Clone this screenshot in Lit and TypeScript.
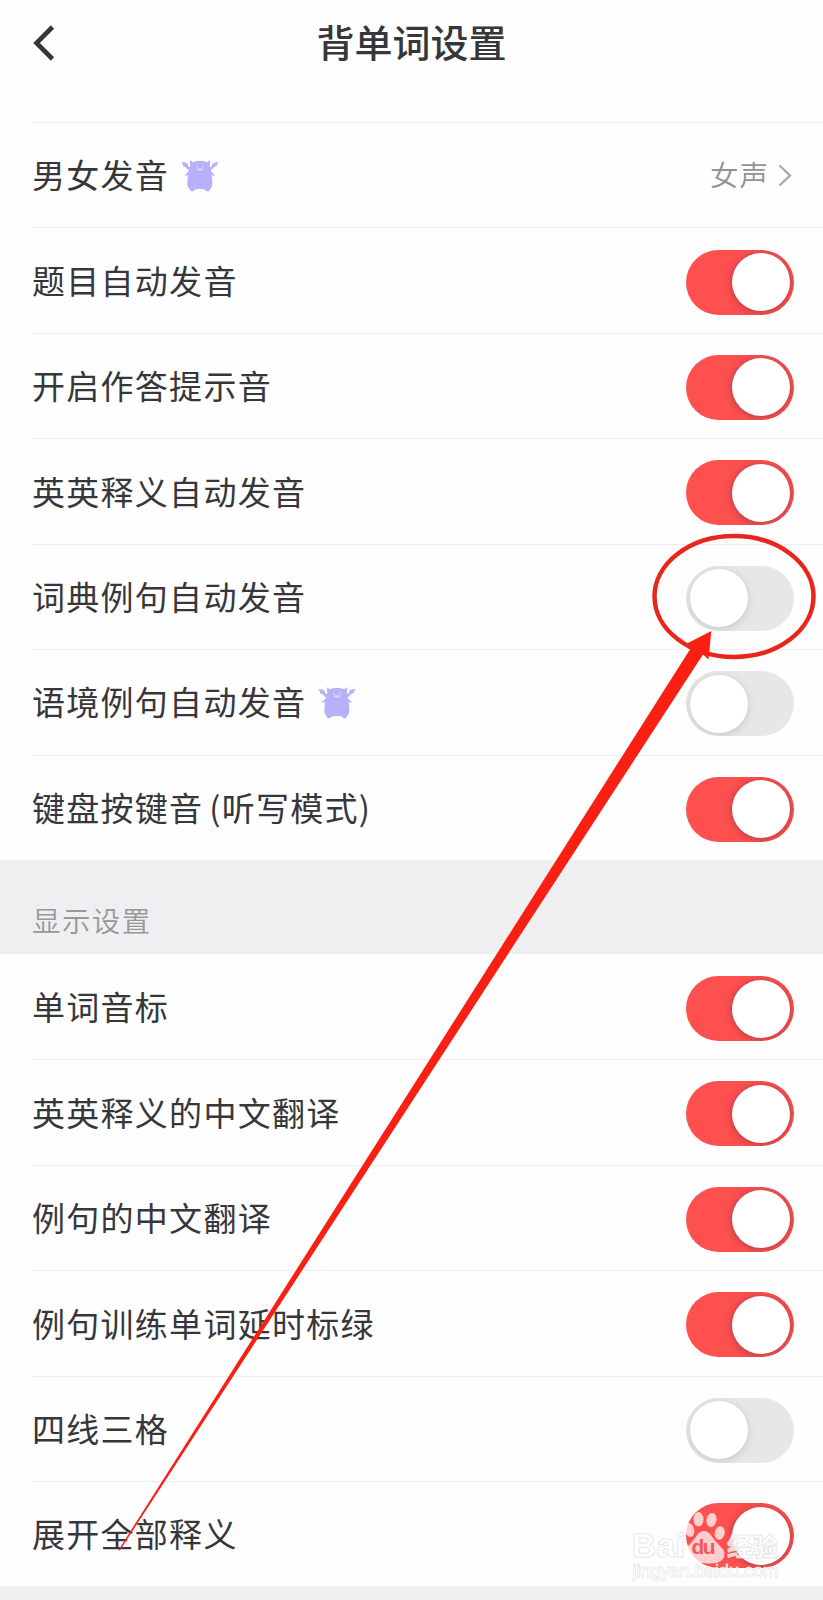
import { LitElement, html, css, svg, nothing } from "lit";
import { customElement, property } from "lit/decorators.js";

interface Setting {
  label: string;
  on?: boolean;
  value?: string;
  premium?: boolean;
}

const SOUND: Setting[] = [
  { label: "男女发音", value: "女声", premium: true },
  { label: "题目自动发音", on: true },
  { label: "开启作答提示音", on: true },
  { label: "英英释义自动发音", on: true },
  { label: "词典例句自动发音", on: false },
  { label: "语境例句自动发音", on: false, premium: true },
  { label: "键盘按键音 (听写模式)", on: true },
];

const DISPLAY: Setting[] = [
  { label: "单词音标", on: true },
  { label: "英英释义的中文翻译", on: true },
  { label: "例句的中文翻译", on: true },
  { label: "例句训练单词延时标绿", on: true },
  { label: "四线三格", on: false },
  { label: "展开全部释义", on: true },
];

@customElement("toggle-switch")
class ToggleSwitch extends LitElement {
  @property({ type: Boolean, reflect: true }) on = false;

  static styles = css`
    :host {
      display: flex;
      align-items: center;
      box-sizing: border-box;
      width: 108px;
      height: 65px;
      padding: 0 4px;
      border-radius: 33px;
      background: #e7e7e9;
      overflow: hidden;
    }
    :host([on]) {
      background: #ff5050;
      justify-content: flex-end;
    }
    .knob {
      width: 58px;
      height: 58px;
      border-radius: 50%;
      background: #fff;
      box-shadow: 0 2px 8px rgba(0, 0, 0, 0.14);
    }
    :host([on]) .knob {
      box-shadow: 0 1px 8px rgba(60, 30, 40, 0.42);
    }
  `;

  render() {
    return html`<div class="knob"></div>`;
  }
}

@customElement("monster-badge")
class MonsterBadge extends LitElement {
  static styles = css`
    :host {
      display: block;
      width: 38px;
      height: 32px;
    }
    .art {
      display: block;
      width: 38px;
      height: 32px;
    }
  `;

  render() {
    return html`<svg class="art" viewBox="0 0 114 96">
      <path
        fill="#b7b0fb"
        d="M1 6 Q14 5 20 12 L23 22 L28 18 Q27 14 27 9 Q26 4 28 1 Q32 3 34 7 Q45 2 57 2 Q69 2 80 7 Q82 3 86 1 Q88 4 87 9 Q87 14 86 18 L91 22 L94 12 Q100 5 113 6 Q107 12 107 18 Q99 18 98 24 Q94 24 91 30 L89 31 Q91 36 94 39 Q99 41 102 47 Q97 48 92 45 Q94 60 94 75 Q93 83 87 88 Q86 93 83 94 L76 94 Q74 94 74 89 Q57 85 39 89 Q39 94 37 94 L30 94 Q27 93 26 88 Q20 83 19 75 Q19 60 21 45 Q16 48 11 47 Q14 41 19 39 Q22 36 24 31 L22 30 Q20 25 15 25 Q15 19 7 20 Q7 12 1 6 Z"
      ></path>
      <g fill="none" stroke="#e9e5ff" stroke-width="2.6" stroke-linecap="round">
        <path d="M46 19 L50 22 M68 19 L64 22 M49 28 Q57 36 66 28 Z"></path>
      </g>
    </svg>`;
  }
}

@customElement("setting-row")
class SettingRow extends LitElement {
  @property({ attribute: false }) item!: Setting;

  static styles = css`
    :host {
      display: flex;
      align-items: center;
      box-sizing: border-box;
      height: 105.43px;
      margin-left: 32px;
      padding: 2.8px 29px 0 0;
      border-top: 1px solid #ededee;
    }
    .label {
      margin-top: -4.6px;
      font-size: 33px;
      letter-spacing: 1.28px;
      word-spacing: -2.8px;
      line-height: 48px;
      white-space: pre;
      color: #37373b;
    }
    .badge {
      margin: -2px 0 0 12px;
    }
    .end {
      display: flex;
      align-items: center;
      margin-left: auto;
    }
    .value {
      margin-top: -5px;
      font-size: 28.5px;
      letter-spacing: 1px;
      line-height: 40px;
      font-weight: 350;
      color: #929294;
    }
    .chevron {
      width: 14px;
      height: 23px;
      margin: -2px 2px 0 9px;
    }
  `;

  render() {
    const { label, on, value, premium } = this.item;
    return html`
      <span class="label">${label}</span>
      ${premium ? html`<monster-badge class="badge"></monster-badge>` : nothing}
      <div class="end">
        ${value
          ? html`<span class="value">${value}</span>
              <svg class="chevron" viewBox="0 0 14 23">
                <path d="M1.5 1.5 L12 11.5 L1.5 21.5" fill="none" stroke="#a9a9ab" stroke-width="2.4"></path>
              </svg>`
          : html`<toggle-switch ?on=${on}></toggle-switch>`}
      </div>
    `;
  }
}

@customElement("app-root")
class AppRoot extends LitElement {
  static styles = css`
    :host {
      display: block;
      position: relative;
      width: 823px;
      height: 1600px;
      overflow: hidden;
      background: #efeff1;
      font-family: "Noto Sans CJK SC", sans-serif;
    }
    .bar {
      display: grid;
      grid-template-columns: 82px 1fr 82px;
      align-items: center;
      height: 85px;
      padding-bottom: 37px;
      background: #fefefe;
    }
    .back {
      width: 25px;
      height: 38px;
      margin-left: 33px;
    }
    .title {
      margin: -4px 0 0;
      text-align: center;
      font-size: 38px;
      line-height: 56px;
      font-weight: 500;
      color: #37373b;
    }
    .group {
      background: #fefefe;
    }
    .plain {
      border-top-color: transparent;
    }
    .section {
      box-sizing: border-box;
      height: 94px;
      margin: 0;
      padding: 39px 0 0 32px;
      font-size: 28.5px;
      letter-spacing: 1.4px;
      line-height: 42px;
      font-weight: 350;
      color: #98989a;
    }
    .overlay {
      position: absolute;
      top: 0;
      left: 0;
      width: 823px;
      height: 1600px;
      pointer-events: none;
    }
    .brand {
      font-family: "Liberation Sans", sans-serif;
      font-weight: 700;
    }
    .brand-cn {
      font-family: "Noto Sans CJK SC", sans-serif;
      font-weight: 700;
    }
    .url {
      font-family: "Liberation Sans", sans-serif;
    }
  `;

  private watermark() {
    return svg`
      <g fill="#fff" fill-opacity="0.75" stroke="#cfcfd2" stroke-opacity="0.7" stroke-width="1.2" paint-order="stroke">
        <text class="brand" x="632" y="1557" font-size="33" textLength="53">Bai</text>
        <text class="brand-cn" x="727" y="1555.5" font-size="25.5" textLength="51">经验</text>
        <text class="url" x="632.5" y="1577" font-size="18.5" stroke-width="0.9" textLength="146">jingyan.baidu.com</text>
      </g>
      <g fill="#fff" fill-opacity="0.72">
        <ellipse cx="689.5" cy="1530" rx="4.7" ry="7" transform="rotate(-12 689.5 1530)"></ellipse>
        <ellipse cx="698.5" cy="1519.3" rx="5" ry="7.2"></ellipse>
        <ellipse cx="711.5" cy="1520" rx="5" ry="7" transform="rotate(10 711.5 1520)"></ellipse>
        <ellipse cx="719.7" cy="1533" rx="5" ry="6.8" transform="rotate(12 719.7 1533)"></ellipse>
        <path d="M704 1531 Q709 1531 713 1538 Q716 1542 720 1546 Q728 1553 722 1560 Q716 1565 704 1563 Q692 1565 686 1560 Q680 1553 688 1546 Q692 1542 695 1538 Q699 1531 704 1531 Z"></path>
      </g>
      <text class="brand" x="691.5" y="1554" font-size="21" textLength="24" fill="#f4595a">du</text>
    `;
  }

  render() {
    return html`
      <header class="bar">
        <svg class="back" viewBox="0 0 25 38">
          <path d="M19.5 3 L3.5 19 L19.5 35" fill="none" stroke="#37373b" stroke-width="4.6"></path>
        </svg>
        <h1 class="title">背单词设置</h1>
      </header>
      <section class="group">${SOUND.map((s) => html`<setting-row .item=${s}></setting-row>`)}</section>
      <h2 class="section">显示设置</h2>
      <section class="group">
        ${DISPLAY.map((s, i) => html`<setting-row class=${i ? "" : "plain"} .item=${s}></setting-row>`)}
      </section>
      <svg class="overlay" viewBox="0 0 823 1600">
        <ellipse cx="734" cy="596.5" rx="79.5" ry="60.5" fill="none" stroke="#e8261b" stroke-width="4.5"></ellipse>
        <path fill="#f91f13" d="M118.5 1550 L691.5 647 L687 643.5 L711.3 631 L708.5 659.5 L703 654.5 L119.8 1550.5 Z"></path>
        ${this.watermark()}
      </svg>
    `;
  }
}
